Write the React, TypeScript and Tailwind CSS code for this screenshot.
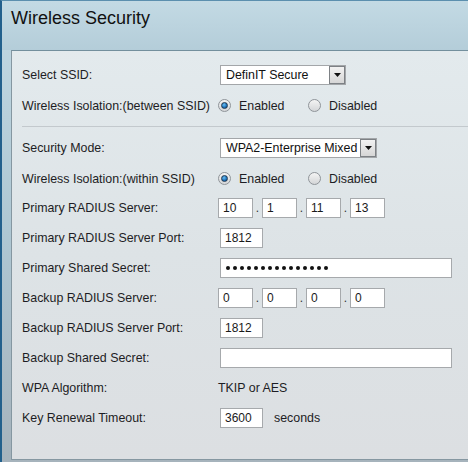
import React from "react";

const font = { fontFamily: '"Liberation Sans", Arial, sans-serif' };

function Radio({ checked }: { checked?: boolean }) {
  return (
    <span className="inline-flex w-[13px] h-[13px] rounded-full border border-[#8f9499] bg-gradient-to-b from-[#f4f4f4] to-[#d4d6d8] items-center justify-center shrink-0">
      {checked && (
        <span className="w-[7px] h-[7px] rounded-full border border-[#233a52] bg-[radial-gradient(circle_at_40%_35%,#6cc0f4,#1a6fb8_60%,#0d3f73)]" />
      )}
    </span>
  );
}

function Select({ value, width }: { value: string; width: string }) {
  return (
    <div className={`${width} h-[20px] border border-[#a3a6a9] bg-white flex items-stretch`}>
      <div className="flex-1 pl-[5px] text-[12.4px] leading-[18px] text-[#111] whitespace-nowrap overflow-hidden">{value}</div>
      <div className="w-[16px] border border-[#7d8185] bg-gradient-to-b from-[#f2f2f2] to-[#d6d6d6] flex items-center justify-center">
        <svg width="7" height="4" viewBox="0 0 7 4"><path d="M0 0 H7 L3.5 4 Z" fill="#111" /></svg>
      </div>
    </div>
  );
}

function Input({ value, width, className = "" }: { value?: string; width: string; className?: string }) {
  return (
    <div className={`${width} h-[20px] border border-[#a6a9ac] bg-white pl-[4px] text-[12px] leading-[18px] text-[#1a1a1a] ${className}`}>
      {value}
    </div>
  );
}

function IP({ parts }: { parts: string[] }) {
  return (
    <div className="flex items-center -ml-[2px]">
      {parts.map((p, i) => (
        <React.Fragment key={i}>
          {i > 0 && <span className="w-[9px] text-center text-[12px] leading-[20px] text-[#333]">.</span>}
          <Input value={p} width="w-[35px]" />
        </React.Fragment>
      ))}
    </div>
  );
}

function Row({ label, children, className = "" }: { label: string; children?: React.ReactNode; className?: string }) {
  return (
    <div className={`flex items-center h-[20px] ${className}`}>
      <div className="w-[198px] text-[12.4px] text-[#1d1d24] whitespace-nowrap">{label}</div>
      {children}
    </div>
  );
}

function RadioPair() {
  return (
    <div className="flex items-center text-[12.4px] text-[#1d1d24] -ml-[2px]">
      <Radio checked />
      <span className="ml-[8px] w-[69px]">Enabled</span>
      <Radio />
      <span className="ml-[8px]">Disabled</span>
    </div>
  );
}

export default function App() {
  return (
    <div style={font} className="w-[468px] h-[462px] overflow-hidden border-l-[2px] border-[#22608c] border-t border-t-[#5b8fae] bg-gradient-to-b from-[#c2d9e3] via-[#aec7d3] to-[#a6b3bc] flex flex-col">
      <div className="h-[49px] shrink-0 pl-[9px] pt-[6px] bg-gradient-to-b from-[#c3dae4] to-[#b4cdd9]">
        <div className="text-[18px] leading-[22px] text-[#111]">Wireless Security</div>
      </div>
      <div className="ml-[9px] h-[410px] shrink-0 border-l border-t border-b border-[#8597a1] border-t-[#738f9d] bg-gradient-to-b from-[#e3eaed] via-[#dde3e6] to-[#dcdfe2] pl-[10px] pt-[14px] flex flex-col">
        <Row label="Select SSID:">
          <Select value="DefinIT Secure" width="w-[126px]" />
        </Row>
        <Row label="Wireless Isolation:(between SSID)" className="mt-[11px]">
          <RadioPair />
        </Row>
        <div className="mt-[10px] h-px bg-[#c3c9cd]" />
        <Row label="Security Mode:" className="mt-[11px]">
          <Select value="WPA2-Enterprise Mixed" width="w-[157px]" />
        </Row>
        <Row label="Wireless Isolation:(within SSID)" className="mt-[11px]">
          <RadioPair />
        </Row>
        <Row label="Primary RADIUS Server:" className="mt-[9px]">
          <IP parts={["10", "1", "11", "13"]} />
        </Row>
        <Row label="Primary RADIUS Server Port:" className="mt-[10px]">
          <Input value="1812" width="w-[43px]" />
        </Row>
        <Row label="Primary Shared Secret:" className="mt-[10px]">
          <div className="w-[232px] h-[20px] border border-[#a6a9ac] bg-white pl-[5px] flex items-center gap-[3px]">
            {Array.from({ length: 15 }).map((_, i) => (
              <span key={i} className="w-[4px] h-[4px] rounded-full bg-[#111]" />
            ))}
          </div>
        </Row>
        <Row label="Backup RADIUS Server:" className="mt-[10px]">
          <IP parts={["0", "0", "0", "0"]} />
        </Row>
        <Row label="Backup RADIUS Server Port:" className="mt-[10px]">
          <Input value="1812" width="w-[43px]" />
        </Row>
        <Row label="Backup Shared Secret:" className="mt-[10px]">
          <Input width="w-[232px]" />
        </Row>
        <Row label="WPA Algorithm:" className="mt-[10px]">
          <span className="-ml-[2px] text-[12.4px] text-[#1d1d24]">TKIP or AES</span>
        </Row>
        <Row label="Key Renewal Timeout:" className="mt-[10px]">
          <Input value="3600" width="w-[43px]" />
          <span className="ml-[11px] text-[12.4px] text-[#1d1d24]">seconds</span>
        </Row>
      </div>
    </div>
  );
}
